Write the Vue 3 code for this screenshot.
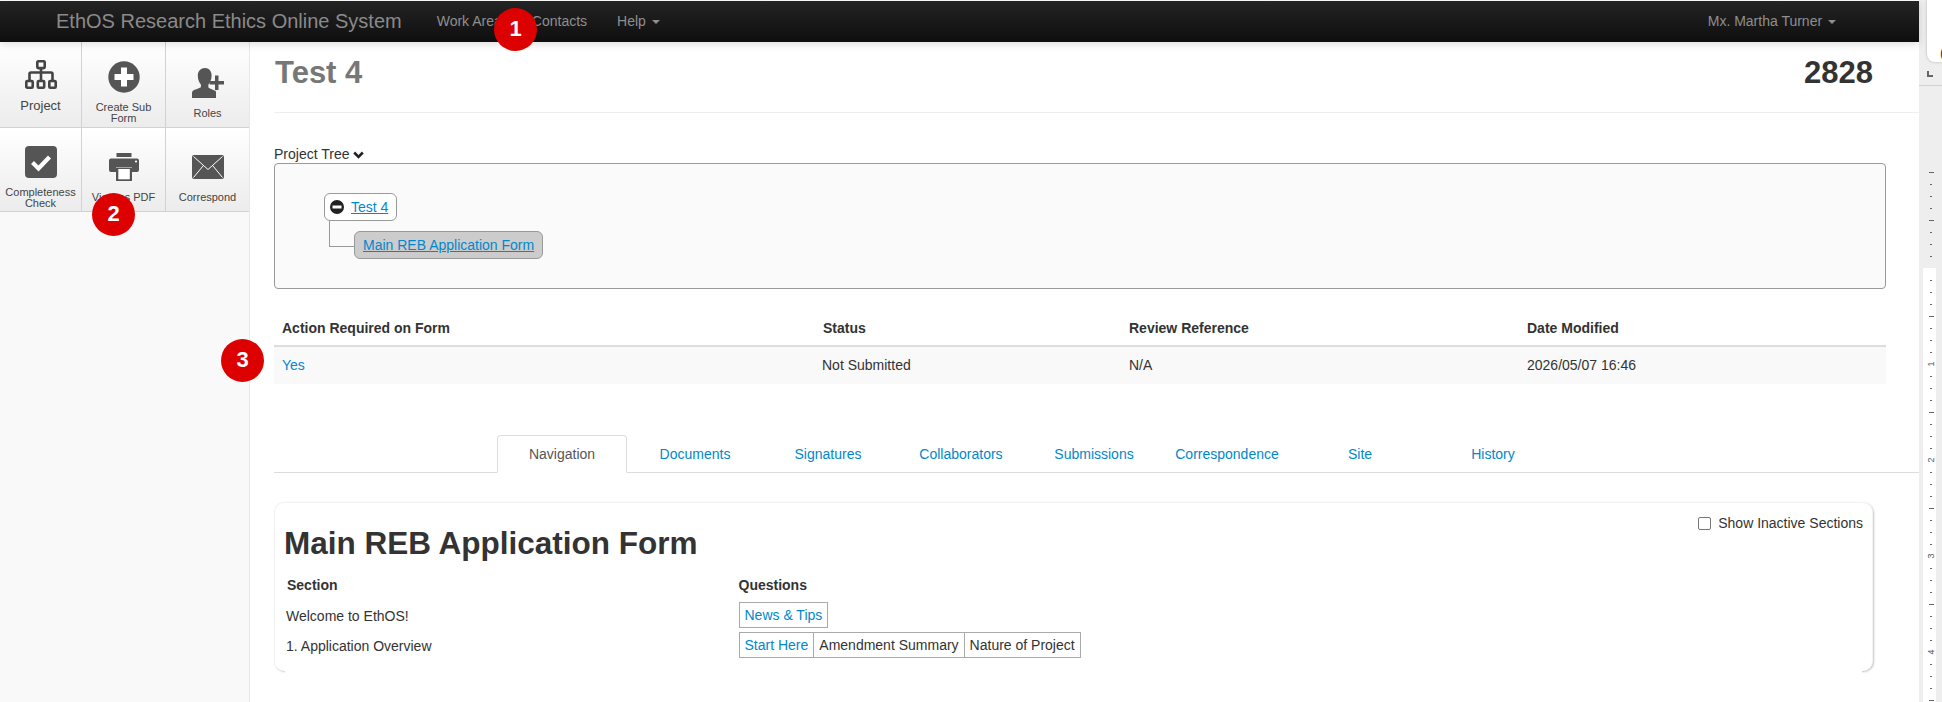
<script setup>
const tools = [
  { id: 'tree', label: ['Project'], big: true, pad: 18, gap: 10, w: 32, h: 29 },
  { id: 'plus', label: ['Create Sub', 'Form'], pad: 19, gap: 9, w: 32, h: 32 },
  { id: 'user', label: ['Roles'], pad: 26, gap: 10, w: 32, h: 30 },
  { id: 'check', label: ['Completeness', 'Check'], pad: 18, gap: 9, w: 32, h: 32 },
  { id: 'print', label: ['View as PDF'], pad: 25, gap: 11, w: 30, h: 28 },
  { id: 'mail', label: ['Correspond'], pad: 27, gap: 13, w: 32, h: 24 }
]
const tabs = ['Navigation', 'Documents', 'Signatures', 'Collaborators', 'Submissions', 'Correspondence', 'Site', 'History']
const ticks = Array.from({ length: 45 }, (_, i) => {
  const y = 172 + i * 12
  const off = y - 268
  let kind = 'short'
  let num = ''
  if (y === 172 || y === 220) kind = 'long'
  else if (off === 0) kind = 'none'
  else if (off % 96 === 0) { kind = 'num'; num = String(off / 96) }
  else if (off % 48 === 0) kind = 'long'
  return { y, kind, num, paper: y >= 268 }
})
</script>

<template>
  <div class="page">
    <div class="app">
      <nav class="navbar">
        <span class="brand">EthOS Research Ethics Online System</span>
        <a class="nav-link work">Work Area</a>
        <a class="nav-link contacts">Contacts</a>
        <a class="nav-link help">Help <i class="caret"></i></a>
        <a class="nav-link user">Mx. Martha Turner <i class="caret"></i></a>
      </nav>
      <div class="body">
        <aside class="sidebar">
          <div class="tools">
            <div v-for="t in tools" :key="t.id" class="tool" :style="{ paddingTop: t.pad + 'px', gap: t.gap + 'px' }">
              <svg class="icon" :width="t.w" :height="t.h" :viewBox="`0 0 ${t.w} ${t.h}`">
                <g v-if="t.id === 'tree'" fill="none" stroke="#444" stroke-width="2.6">
                  <rect x="12.300" y="1.300" width="7.400" height="6.800" rx="1" />
                  <path d="M16 8v13M4.500 21v-7a1.500 1.500 0 0 1 1.500-1.500h20a1.500 1.500 0 0 1 1.500 1.500v7" />
                  <rect x="1.300" y="21" width="6.400" height="6.700" rx="1" />
                  <rect x="12.800" y="21" width="6.400" height="6.700" rx="1" />
                  <rect x="24.300" y="21" width="6.400" height="6.700" rx="1" />
                </g>
                <g v-else-if="t.id === 'plus'">
                  <circle cx="16" cy="16" r="15.700" fill="#555" />
                  <path d="M13 6.500h6V13h6.500v6H19v6.500h-6V19H6.500v-6H13z" fill="#fff" />
                </g>
                <g v-else-if="t.id === 'user'" fill="#555">
                  <path d="M13 0c4 0 6.600 3 6.600 7.600 0 3.600-1.300 7-3.200 8.800v3c1.200 1 2.700 1.600 4.500 2.300 1.200.5 2.400 1 3.100 1.800V30H0v-5.500c0-1.600 2-2.400 4.300-3.200 1.700-.6 3.300-1.100 4.600-2v-2.900C7 14.600 5.800 11.300 5.800 7.600 5.800 3 9 0 13 0z" />
                  <path d="M23 7.500h3.500v5.500H32v3.400h-5.500V22H23v-5.600h-5.500V13H23z" />
                </g>
                <g v-else-if="t.id === 'check'">
                  <rect width="32" height="32" rx="4" fill="#555" />
                  <path d="M7.500 16.500l6 6 11-11.500" fill="none" stroke="#fff" stroke-width="4.200" />
                </g>
                <g v-else-if="t.id === 'print'" fill="#555">
                  <rect x="7.500" width="15" height="4" />
                  <path d="M2 5.500h26a2 2 0 0 1 2 2V17a2 2 0 0 1-2 2h-5v-5H7v5H2a2 2 0 0 1-2-2V7.500a2 2 0 0 1 2-2z" />
                  <circle cx="27" cy="8.500" r="1.100" fill="#fff" />
                  <path d="M7 14.500h16V28H7z" />
                  <rect x="9.300" y="16" width="11.500" height="10.300" fill="#fff" />
                </g>
                <g v-else>
                  <rect width="32" height="24" rx="2" fill="#555" />
                  <path d="M1.500 1.500L16 14.500 30.500 1.500M1.500 22.500L11 11M30.500 22.500L21 11" fill="none" stroke="#fff" stroke-width="1" />
                </g>
              </svg>
              <span class="tool-label" :class="{ big: t.big }">
                <span v-for="l in t.label" :key="l" class="line">{{ l }}</span>
              </span>
            </div>
          </div>
        </aside>
        <main class="content">
          <header class="title-row">
            <h1 class="title">Test 4</h1>
            <div class="number">2828</div>
          </header>
          <div class="tree-label">Project Tree
            <svg class="chev" width="11" height="8" viewBox="0 0 11 8"><path d="M1.200 1.500L5.500 5.800 9.800 1.500" fill="none" stroke="#222" stroke-width="2.600" /></svg>
          </div>
          <div class="tree-box">
            <div class="node root">
              <svg width="14" height="14" viewBox="0 0 14 14"><circle cx="7" cy="7" r="7" fill="#222" /><rect x="2.500" y="5.500" width="9" height="3" fill="#fff" /></svg>
              <a class="u">Test 4</a>
            </div>
            <div class="node child"><a class="u">Main REB Application Form</a></div>
          </div>
          <table class="forms">
            <colgroup><col class="c1"><col class="c2"><col class="c3"><col class="c4"></colgroup>
            <thead>
              <tr><th>Action Required on Form</th><th>Status</th><th>Review Reference</th><th>Date Modified</th></tr>
            </thead>
            <tbody>
              <tr><td><a>Yes</a></td><td>Not Submitted</td><td>N/A</td><td>2026/05/07 16:46</td></tr>
            </tbody>
          </table>
          <ul class="tabs">
            <li v-for="(t, i) in tabs" :key="t" class="tab" :class="{ active: i === 0 }">{{ t }}</li>
          </ul>
          <section class="card">
            <div class="card-head">
              <h2 class="form-title">Main REB Application Form</h2>
              <label class="inactive"><span class="box"></span>Show Inactive Sections</label>
            </div>
            <div class="sections">
              <b class="sec-h">Section</b><b class="q-h">Questions</b>
              <span class="sec">Welcome to EthOS!</span>
              <div class="qs"><a class="q">News &amp; Tips</a></div>
              <span class="sec">1. Application Overview</span>
              <div class="qs"><a class="q">Start Here</a><span class="q">Amendment Summary</span><span class="q">Nature of Project</span></div>
            </div>
          </section>
        </main>
      </div>
      <span class="pin p1">1</span>
      <span class="pin p2">2</span>
      <span class="pin p3">3</span>
    </div>
    <div class="pane">
      <div class="doc-top">(</div>
      <div class="stop"></div>
      <div class="ruler">
        <div v-for="t in ticks" :key="t.y" class="tick-row" :class="{ paper: t.paper }">
          <span v-if="t.kind === 'num'" class="tick-num">{{ t.num }}</span>
          <i v-else-if="t.kind !== 'none'" class="tick" :class="t.kind"></i>
        </div>
      </div>
    </div>
  </div>
</template>

<style scoped>
.page { display: flex; width: 1942px; height: 702px; overflow: hidden; background: #fff; color: #333; font: 14px/20px "Liberation Sans", Arial, sans-serif; }
.app { position: relative; width: 1919px; flex: none; display: flex; flex-direction: column; padding-top: 1px; box-sizing: border-box; }
a { color: #0088cc; }
.u { text-decoration: underline; }
.navbar { position: relative; z-index: 2; display: flex; align-items: center; height: 41px; padding-bottom: 2px; box-sizing: border-box; flex: none; background: linear-gradient(#242424, #0e0e0e); box-shadow: 0 2px 8px rgba(0, 0, 0, .14); color: #8f8f8f; }
.brand { margin-left: 56px; font-size: 20px; color: #8a8a8a; white-space: nowrap; }
.nav-link { color: #8f8f8f; white-space: nowrap; }
.work { margin-left: 35px; }
.contacts { margin-left: 30px; }
.help { margin-left: 30px; }
.user { margin-left: auto; margin-right: 83px; }
.caret { display: inline-block; vertical-align: middle; margin-left: 2px; border-top: 4px solid #8f8f8f; border-left: 4px solid transparent; border-right: 4px solid transparent; }
.body { display: flex; flex: 1; min-height: 0; }
.sidebar { width: 250px; flex: none; box-sizing: border-box; background: #f9f9f9; border-right: 1px solid #e8e8e8; }
.tools { display: grid; grid-template-columns: 82px 84px 83px; grid-template-rows: 86px 84px; }
.tool { display: flex; flex-direction: column; align-items: center; box-sizing: border-box; border-right: 1px solid #d2d2d2; border-bottom: 1px solid #d2d2d2; background: linear-gradient(#fff, #ececec); color: #444; }
.tool:nth-child(3n) { border-right: 0; }
.icon { flex: none; display: block; }
.tool-label { display: flex; flex-direction: column; align-items: center; font-size: 11px; line-height: 11px; color: #444; white-space: nowrap; }
.tool-label.big { font-size: 13px; line-height: 14px; }
.line { display: block; }
.content { flex: 1; min-width: 0; }
.title-row { display: flex; justify-content: space-between; margin-left: 24px; height: 71px; padding: 13px 46px 0 1px; box-sizing: border-box; border-bottom: 1px solid #eee; }
.title, .number { margin: 0; font-size: 31px; line-height: 36px; font-weight: 700; }
.title { color: #777; }
.number { color: #333; }
.tree-label { margin: 30px 0 0 24px; height: 20px; line-height: 22px; color: #333; }
.tree-box { width: 1612px; height: 126px; margin-left: 24px; box-sizing: border-box; padding: 29px 0 0 49px; border: 1px solid #999; border-radius: 4px; background: #fafafa; }
.node { position: relative; display: flex; align-items: center; box-sizing: border-box; width: max-content; height: 28px; padding: 0 8px; border: 1px solid #999; border-radius: 6px; font-size: 14px; }
.root { background: #fff; padding-left: 5px; padding-right: 8px; gap: 7px; }
.child { margin: 10px 0 0 30px; background: #ccc; }
.child::before { content: ""; position: absolute; left: -26px; top: -11px; width: 25px; height: 25px; border-left: 1px solid #999; border-bottom: 1px solid #999; }
.forms { width: 1612px; margin: 20px 0 0 24px; border-collapse: collapse; table-layout: fixed; }
.c1 { width: 541px; } .c2 { width: 306px; } .c3 { width: 398px; } .c4 { width: 367px; }
th { height: 35px; padding: 1px 8px 0; text-align: left; font-size: 14px; vertical-align: middle; border-bottom: 2px solid #ddd; color: #333; }
td { height: 36px; padding: 0 8px 1px 8px; background: #f9f9f9; font-size: 14px; }
td:nth-child(2) { padding-left: 7px; }
.tabs { display: flex; margin: 51px 0 0 24px; padding: 0 0 0 223px; height: 38px; box-sizing: border-box; list-style: none; border-bottom: 1px solid #ddd; }
.tab { width: 130px; height: 38px; margin-right: 3px; box-sizing: border-box; text-align: center; line-height: 38px; color: #0088cc; flex: none; white-space: nowrap; }
.tab.active { border: 1px solid #ddd; border-bottom-color: #fff; border-radius: 4px 4px 0 0; line-height: 36px; color: #555; background: #fff; }
.card { position: relative; width: 1599px; height: 169px; margin: 29px 0 0 24px; padding: 0 9px 0 9px; box-sizing: border-box; border: 1px solid #f3f3f3; border-bottom: 0; border-radius: 10px; box-shadow: 1px 1px 2px #c8c8c8; background: #fff; }
.card::after { content: ""; position: absolute; left: 10px; right: 10px; bottom: -4px; height: 6px; background: #fff; }
.card-head { display: flex; justify-content: space-between; align-items: flex-start; height: 69px; }
.form-title { margin: 22px 0 0; font-size: 31.500px; line-height: 36px; font-weight: 700; color: #333; white-space: nowrap; }
.inactive { display: flex; align-items: center; gap: 7px; margin-top: 10px; }
.box { width: 13px; height: 13px; box-sizing: border-box; border: 1px solid #777; border-radius: 2px; background: #fff; }
.sections { display: grid; grid-template-columns: 454.500px auto; grid-auto-rows: 26px; row-gap: 4px; align-items: center; }
.sec-h { padding-left: 3px; font-size: 14px; }
.q-h { font-size: 14px; }
.sec { padding: 2px 0 0 2px; }
.qs { display: flex; width: max-content; height: 26px; box-sizing: border-box; border: 1px solid #aaa; }
.q { padding: 0 5px; line-height: 25px; white-space: nowrap; border-left: 1px solid #aaa; }
.q:first-child { border-left: 0; }
.pin { position: absolute; z-index: 5; display: flex; align-items: center; justify-content: center; width: 43px; height: 43px; padding-bottom: 1px; box-sizing: border-box; border-radius: 50%; background: #dc0000; color: #fff; font-size: 22px; font-weight: 700; }
.p1 { left: 494px; top: 8px; }
.p2 { left: 92px; top: 193px; }
.p3 { left: 221px; top: 339px; }
.pane { flex: 1; min-width: 0; background: #eee; }
.doc-top { box-sizing: border-box; height: 62px; margin-left: 8px; padding: 43px 0 0 13px; overflow: hidden; background: #fff; border-radius: 0 0 0 8px; box-shadow: 0 0 3px rgba(0, 0, 0, .25); font-size: 14px; color: #333; }
.stop { width: 6px; height: 6px; margin: 9px 0 8px 8px; box-sizing: border-box; border-left: 2px solid #666; border-bottom: 2px solid #666; }
.ruler { height: 617px; overflow: hidden; padding-top: 86px; box-sizing: border-box; border-top: 1px solid #d2d2d2; }
.tick-row { display: flex; align-items: flex-start; justify-content: center; box-sizing: border-box; width: 13px; height: 12px; margin-left: 4px; padding-left: 3px; }
.tick-row.paper { background: #fff; }
.tick { display: block; height: 1px; background: #666; }
.tick.short { width: 2px; }
.tick.long { width: 5px; }
.tick-num { margin-top: -6px; font-size: 9px; line-height: 12px; color: #555; transform: rotate(-90deg); }
</style>
